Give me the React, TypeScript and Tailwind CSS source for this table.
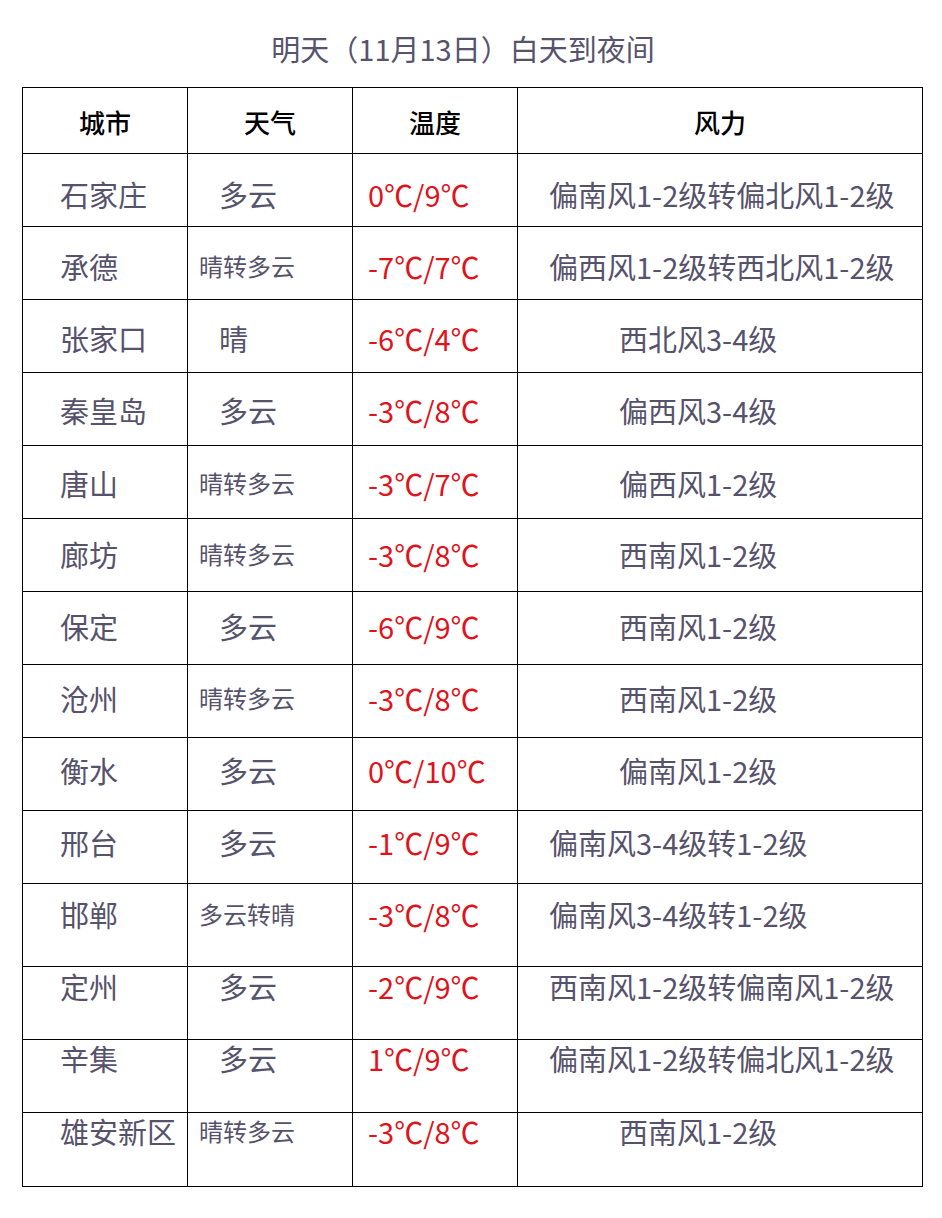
const rows = [
  { city: "石家庄", weather: "多云", temp: "0℃/9℃", wind: "偏南风1-2级转偏北风1-2级", h: 73, pt: 22 },
  { city: "承德", weather: "晴转多云", temp: "-7℃/7℃", wind: "偏西风1-2级转西北风1-2级", h: 73, pt: 21 },
  { city: "张家口", weather: "晴", temp: "-6℃/4℃", wind: "西北风3-4级", h: 73, pt: 20 },
  { city: "秦皇岛", weather: "多云", temp: "-3℃/8℃", wind: "偏西风3-4级", h: 73, pt: 19 },
  { city: "唐山", weather: "晴转多云", temp: "-3℃/7℃", wind: "偏西风1-2级", h: 73, pt: 19 },
  { city: "廊坊", weather: "晴转多云", temp: "-3℃/8℃", wind: "西南风1-2级", h: 73, pt: 17 },
  { city: "保定", weather: "多云", temp: "-6℃/9℃", wind: "西南风1-2级", h: 73, pt: 16 },
  { city: "沧州", weather: "晴转多云", temp: "-3℃/8℃", wind: "西南风1-2级", h: 73, pt: 15 },
  { city: "衡水", weather: "多云", temp: "0℃/10℃", wind: "偏南风1-2级", h: 73, pt: 14 },
  { city: "邢台", weather: "多云", temp: "-1℃/9℃", wind: "偏南风3-4级转1-2级", h: 73, pt: 13 },
  { city: "邯郸", weather: "多云转晴", temp: "-3℃/8℃", wind: "偏南风3-4级转1-2级", h: 83, pt: 12 },
  { city: "定州", weather: "多云", temp: "-2℃/9℃", wind: "西南风1-2级转偏南风1-2级", h: 73, pt: 1 },
  { city: "辛集", weather: "多云", temp: "1℃/9℃", wind: "偏南风1-2级转偏北风1-2级", h: 73, pt: 0 },
  { city: "雄安新区", weather: "晴转多云", temp: "-3℃/8℃", wind: "西南风1-2级", h: 74, pt: 0 },
];

const font = { fontFamily: '"Noto Sans CJK SC", "Noto Sans", sans-serif' };

export default function App() {
  return (
    <div className="min-h-[1218px] w-[942px] bg-white pt-[28px]" style={font}>
      <h1 className="h-[40px] pr-[16px] text-center text-[29px] font-normal leading-[40px] text-[#57536d]">
        明天（11月13日）白天到夜间
      </h1>

      <div className="ml-[22px] mt-[19px] w-[901px] border-l border-t border-black">
        {/* header */}
        <div className="grid h-[66px] grid-cols-[165px_165px_165px_405px] border-b border-black">
          {["城市", "天气", "温度", "风力"].map((t) => (
            <div
              key={t}
              className="flex items-center justify-center border-r border-black pt-[2px] text-[26px] font-medium text-black"
            >
              {t}
            </div>
          ))}
        </div>

        {rows.map((r) => {
          const small = r.weather.length > 2;
          const long = r.wind.length > 8;
          return (
            <div
              key={r.city}
              className="grid grid-cols-[165px_165px_165px_405px] border-b border-black"
              style={{ height: r.h }}
            >
              <div className="border-r border-black pl-[37px]" style={{ paddingTop: r.pt }}>
                <span className="block text-[29px] leading-[36px] text-[#56526c]">{r.city}</span>
              </div>
              <div className="border-r border-black" style={{ paddingTop: r.pt }}>
                {small ? (
                  <span className="block pl-[11px] text-[24px] leading-[36px] text-[#56526c]">
                    {r.weather}
                  </span>
                ) : (
                  <span className="block pl-[31px] text-[29px] leading-[36px] text-[#56526c]">
                    {r.weather}
                  </span>
                )}
              </div>
              <div className="border-r border-black pl-[15px]" style={{ paddingTop: r.pt }}>
                <span className="block text-[29px] leading-[36px] text-[#e0131b]">{r.temp}</span>
              </div>
              <div className="border-r border-black" style={{ paddingTop: r.pt }}>
                <span
                  className={
                    long
                      ? "block pl-[31px] text-[29px] leading-[36px] text-[#56526c]"
                      : "block pl-[101px] text-[29px] leading-[36px] text-[#56526c]"
                  }
                >
                  {r.wind}
                </span>
              </div>
            </div>
          );
        })}
      </div>
    </div>
  );
}
